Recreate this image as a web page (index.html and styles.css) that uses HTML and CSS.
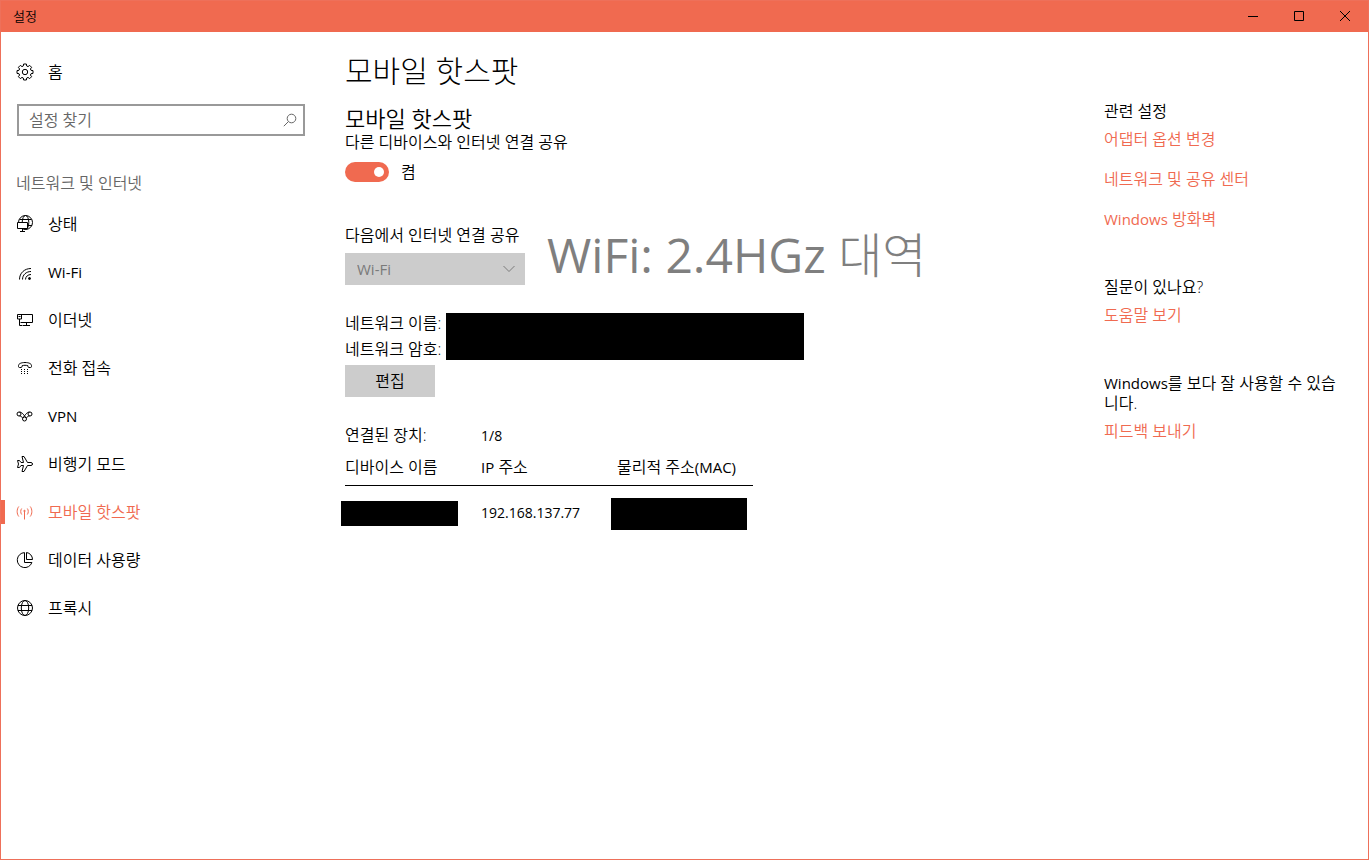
FILE: index.html
```html
<!DOCTYPE html>
<html lang="ko">
<head>
    <meta charset="UTF-8">
    <meta name="viewport" content="width=device-width, initial-scale=1.0">
    <title>설정</title>
    <link rel="stylesheet" href="styles.css">
</head>
<body>
    <!-- Title bar -->
    <header class="titlebar">
        <span class="titlebar-name">설정</span>
        <div class="window-buttons">
            <button type="button" aria-label="최소화">
                <svg width="12" height="12" viewBox="0 0 12 12"><path d="M1 6.5h10"/></svg>
            </button>
            <button type="button" aria-label="최대화">
                <svg width="12" height="12" viewBox="0 0 12 12"><path d="M1.5 1.5h9v9h-9z"/></svg>
            </button>
            <button type="button" aria-label="닫기">
                <svg width="12" height="12" viewBox="0 0 12 12"><path d="M1 1l10 10M11 1L1 11"/></svg>
            </button>
        </div>
    </header>

    <div class="layout">
        <!-- Navigation -->
        <nav class="sidebar">
            <a class="nav-item" href="#home">
                <svg class="icon" viewBox="0 0 18 18"><path d="M7.6 1h2.8l.3 2 1.3.6 1.7-1.2 1.9 1.9-1.2 1.7.6 1.3 2 .3v2.8l-2 .3-.6 1.3 1.2 1.7-1.9 1.9-1.7-1.2-1.3.6-.3 2H7.6l-.3-2-1.3-.6-1.7 1.2-1.9-1.9L3.6 12 3 10.7l-2-.3V7.6l2-.3L3.6 6 2.4 4.3l1.9-1.9L6 3.6 7.3 3z"/><circle cx="9" cy="9" r="2.7"/></svg>
                홈
            </a>
            <div class="search">
                <input type="text" placeholder="설정 찾기" aria-label="설정 찾기">
                <svg class="search-icon" viewBox="0 0 14 14"><circle cx="8.5" cy="5.5" r="4.3"/><path d="M5.4 8.6L.8 13.2"/></svg>
            </div>
            <h2 class="nav-title">네트워크 및 인터넷</h2>
            <a class="nav-item" href="#status">
                <svg class="icon" viewBox="0 0 18 18"><circle cx="9.5" cy="7.5" r="7"/><ellipse cx="9.5" cy="7.5" rx="3.3" ry="7"/><path d="M3.5 4.5h12M3 10.5h13"/><path class="screen" d="M1.5 7.5h10v6h-10z"/><path d="M6.500 13.500v3M4 16.500h5"/></svg>
                상태
            </a>
            <a class="nav-item latin" href="#wifi">
                <svg class="icon" viewBox="0 0 18 18"><path d="M3.5 16.5C3.5 10 8.5 5.500 15 5.500M6.500 16.500c0-4.700 3.800-8 8.500-8M9.500 16.500c0-3 2.500-5 5.500-5"/><circle class="solid" cx="13.500" cy="15.500" r="1"/></svg>
                Wi-Fi
            </a>
            <a class="nav-item" href="#ethernet">
                <svg class="icon" viewBox="0 0 18 18"><path d="M4.500 3.500h12v8h-12M10.500 11.500v3M7 14.500h7M1.500 3.500h4v4.500h-4zM3.500 8v6.500h3M2.500 5.500h2"/></svg>
                이더넷
            </a>
            <a class="nav-item" href="#dialup">
                <svg class="icon" viewBox="0 0 18 18"><path d="M2.500 7.500v-1c0-1.600 2.500-3 6.500-3s6.500 1.400 6.500 3v1c0 .7-.5 1-1 1h-1.500c-.6 0-1-.4-1-1v-.7c-1.500-.7-4.500-.7-6 0v.7c0 .6-.4 1-1 1H3.500c-.5 0-1-.3-1-1z"/><path class="dots" d="M5 10.500h7M5 12.500h7M5 14.500h7"/></svg>
                전화 접속
            </a>
            <a class="nav-item latin" href="#vpn">
                <svg class="icon" viewBox="0 0 18 18"><circle cx="3" cy="7" r="2"/><circle cx="14" cy="7" r="2"/><circle cx="8.500" cy="12" r="2"/><path d="M3.500 5c2.500 0 4.500 3 6.500 6M3.500 9c1.500 0 2.500 1 3.200 2M13.500 5c-2.500 0-4.500 3-6.500 6M13.500 9c-1.500 0-2.500 1-3.200 2"/></svg>
                VPN
            </a>
            <a class="nav-item" href="#airplane">
                <svg class="icon" viewBox="0 0 18 18"><path d="M6 1.500h2l3.500 6h3.500c2 0 2 3 0 3h-3.500L8 16.500H6l1.500-6H5l-1.500 2H1.500L2.500 9 1.500 5.500h2l1.500 2h2.500z"/></svg>
                비행기 모드
            </a>
            <a class="nav-item active" href="#hotspot" aria-current="page">
                <svg class="icon" viewBox="0 0 18 18"><path d="M8.500 8.500v8M5.700 5.500c-1.300 1.500-1.300 4.500 0 6M2.800 3.500c-2.200 2.800-2.200 7.200 0 10M11.300 5.500c1.300 1.500 1.300 4.500 0 6M14.200 3.500c2.200 2.800 2.200 7.200 0 10"/><circle class="solid" cx="8.500" cy="8" r=".7"/></svg>
                모바일 핫스팟
            </a>
            <a class="nav-item" href="#data">
                <svg class="icon" viewBox="0 0 18 18"><path d="M8.500 1.600a7.500 7.500 0 1 0 7.400 9.900H8.500z"/><path d="M10.500 1.500v7h6a7 7 0 0 0-6-7z"/></svg>
                데이터 사용량
            </a>
            <a class="nav-item" href="#proxy">
                <svg class="icon" viewBox="0 0 18 18"><circle cx="9" cy="9" r="7.500"/><ellipse cx="9" cy="9" rx="3.700" ry="7.500"/><path d="M2 6.500h14M2 11.500h14"/></svg>
                프록시
            </a>
        </nav>

        <!-- Hotspot settings -->
        <main class="content">
            <h1>모바일 핫스팟</h1>
            <h2 class="section-title">모바일 핫스팟</h2>
            <p>다른 디바이스와 인터넷 연결 공유</p>
            <label class="toggle">
                <input type="checkbox" role="switch" checked>
                켬
            </label>

            <div class="share">
                <div class="field">
                    <label for="source">다음에서 인터넷 연결 공유</label>
                    <div class="select">
                        <select id="source" disabled>
                            <option>Wi-Fi</option>
                        </select>
                        <svg class="chevron" viewBox="0 0 12 8"><path d="M.5 1L6 6.500 11.500 1"/></svg>
                    </div>
                </div>
                <p class="note">WiFi: 2.4HGz <span class="note-unit">대역</span></p>
            </div>

            <div class="network">
                <div class="network-labels">
                    <p>네트워크 이름:</p>
                    <p>네트워크 암호:</p>
                </div>
                <div class="network-values"></div>
            </div>
            <button class="edit" type="button">편집</button>

            <div class="connected">
                <span>연결된 장치:</span>
                <span class="number">1/8</span>
            </div>
            <table class="devices">
                <thead>
                    <tr><th>디바이스 이름</th><th><span class="latin">IP</span> 주소</th><th>물리적 주소<span class="latin">(MAC)</span></th></tr>
                </thead>
                <tbody>
                    <tr>
                        <td><span class="mask mask-name"></span></td>
                        <td class="number">192.168.137.77</td>
                        <td><span class="mask mask-mac"></span></td>
                    </tr>
                </tbody>
            </table>
        </main>

        <!-- Related links -->
        <aside class="related">
            <section>
                <p>관련 설정</p>
                <a href="#adapter">어댑터 옵션 변경</a>
                <a href="#sharing">네트워크 및 공유 센터</a>
                <a href="#firewall"><span class="latin">Windows</span> 방화벽</a>
            </section>
            <section>
                <p>질문이 있나요?</p>
                <a href="#help">도움말 보기</a>
            </section>
            <section>
                <p><span class="latin">Windows</span>를 보다 잘 사용할 수 있습니다.</p>
                <a href="#feedback">피드백 보내기</a>
            </section>
        </aside>
    </div>
</body>
</html>
```
FILE: styles.css
```css
* {
    box-sizing: border-box;
}

body {
    font-family: "Open Sans", "Noto Sans CJK KR", sans-serif;
    font-size: 16px;
    font-weight: 350;
    line-height: 20px;
    color: #000;
    background-color: #fff;
    margin: 0;
    min-height: 100vh;
    border: 1px solid #ee705a;
}

h1, h2, p {
    margin: 0;
    font-weight: inherit;
}

a {
    text-decoration: none;
}

button, input, select {
    font: inherit;
    color: inherit;
    margin: 0;
}

svg {
    fill: none;
    stroke: currentColor;
    stroke-width: 1;
}

/* Latin letters run larger and thinner than Hangul at the same size */
.latin {
    font-size: 15px;
    font-weight: 400;
    line-height: 1;
}

.number {
    font-size: 14px;
    font-weight: 400;
}

/* Title bar */
.titlebar {
    display: flex;
    justify-content: space-between;
    align-items: center;
    height: 31px;
    background-color: #f06a50;
}

.titlebar-name {
    padding: 0 0 2px 12px;
    font-size: 13px;
}

.window-buttons {
    display: flex;
    height: 30px;
    align-self: flex-start;
}

.window-buttons button {
    display: flex;
    align-items: center;
    justify-content: center;
    width: 46px;
    padding: 0;
    border: none;
    background: none;
}

.layout {
    display: grid;
    grid-template-columns: 304px 1fr 240px;
    column-gap: 40px;
    padding-right: 24px;
}

/* Navigation */
.sidebar {
    padding-top: 16px;
}

.nav-item {
    position: relative;
    display: flex;
    align-items: center;
    gap: 14px;
    height: 48px;
    padding-left: 15px;
    color: #000;
}

.nav-item.active {
    color: #f06a50;
}

.nav-item.active::before {
    content: '';
    position: absolute;
    left: 0;
    width: 4px;
    height: 24px;
    background-color: #f06a50;
}

.icon {
    width: 18px;
    height: 18px;
}

.solid {
    fill: currentColor;
}

.screen {
    fill: #fff;
}

.dots {
    stroke-dasharray: 1 2;
}

.search {
    display: flex;
    align-items: center;
    height: 32px;
    margin: 8px 0 0 16px;
    padding: 0 6px 0 10px;
    border: 2px solid #999;
}

.search input {
    flex: 1;
    min-width: 0;
    padding: 0;
    border: none;
    outline: none;
    background: none;
}

.search input::placeholder {
    color: #666;
    opacity: 1;
}

.search-icon {
    width: 14px;
    height: 14px;
    color: #666;
}

.nav-title {
    margin: 37px 0 7px 15px;
    font-size: 16px;
    color: #666;
}

/* Hotspot settings */
.content {
    padding-top: 19px;
}

h1 {
    font-size: 30px;
    font-weight: 300;
    line-height: 40px;
}

.section-title {
    margin-top: 13px;
    font-size: 22px;
    line-height: 28px;
}

.toggle {
    display: flex;
    align-items: center;
    gap: 12px;
    width: max-content;
    margin-top: 10px;
}

.toggle input {
    display: flex;
    align-items: center;
    appearance: none;
    width: 44px;
    height: 20px;
    padding: 0 5px;
    border-radius: 10px;
    background-color: #999;
}

.toggle input:checked {
    justify-content: flex-end;
    background-color: #f06a50;
}

.toggle input::before {
    content: '';
    width: 10px;
    height: 10px;
    border-radius: 50%;
    background-color: #fff;
}

.share {
    display: flex;
    align-items: center;
    gap: 22px;
    margin-top: 43px;
}

.field {
    width: 180px;
}

.field label {
    display: block;
    white-space: nowrap;
}

.select {
    display: flex;
    align-items: center;
    height: 32px;
    margin-top: 8px;
    padding-right: 10px;
    background-color: #ccc;
    color: #7a7a7a;
}

.select select {
    flex: 1;
    appearance: none;
    padding: 0 12px;
    border: none;
    background: none;
    font-size: 15px;
    font-weight: 400;
    opacity: 1;
}

.chevron {
    width: 12px;
    height: 8px;
}

.note {
    font-size: 48px;
    font-weight: 400;
    line-height: 60px;
    color: #7f7f7f;
    white-space: nowrap;
}

.note-unit {
    font-weight: 300;
}

.network {
    display: flex;
    align-items: center;
    gap: 2px;
    margin-top: 25px;
}

.network-labels {
    width: 99px;
    line-height: 26px;
    white-space: nowrap;
}

.network-values {
    width: 358px;
    height: 47px;
    background-color: #000;
}

.edit {
    display: block;
    width: 90px;
    height: 32px;
    margin-top: 3px;
    padding: 0;
    border: none;
    background-color: #ccc;
}

.connected {
    display: grid;
    grid-template-columns: 136px 1fr;
    align-items: baseline;
    margin-top: 28px;
}

.devices {
    width: 408px;
    margin-top: 11px;
    table-layout: fixed;
    border-collapse: collapse;
    text-align: left;
    white-space: nowrap;
}

.devices th {
    padding: 0 0 8px;
    border-bottom: 1px solid #000;
    font-weight: inherit;
}

.devices td {
    position: relative;
    height: 54px;
    padding: 0;
}

/* Blacked-out values spill over the cell edges */
.mask {
    position: absolute;
    background-color: #000;
}

.mask-name {
    top: 15px;
    left: -4px;
    width: 117px;
    height: 25px;
}

.mask-mac {
    top: 12px;
    left: -6px;
    width: 136px;
    height: 32px;
}

/* Related links */
.related {
    padding-top: 69px;
}

.related section {
    margin-bottom: 48px;
}

.related p {
    word-break: break-all;
}

.related a {
    display: block;
    margin-top: 20px;
    color: #f06a50;
}

.related p + a {
    margin-top: 8px;
}
```
